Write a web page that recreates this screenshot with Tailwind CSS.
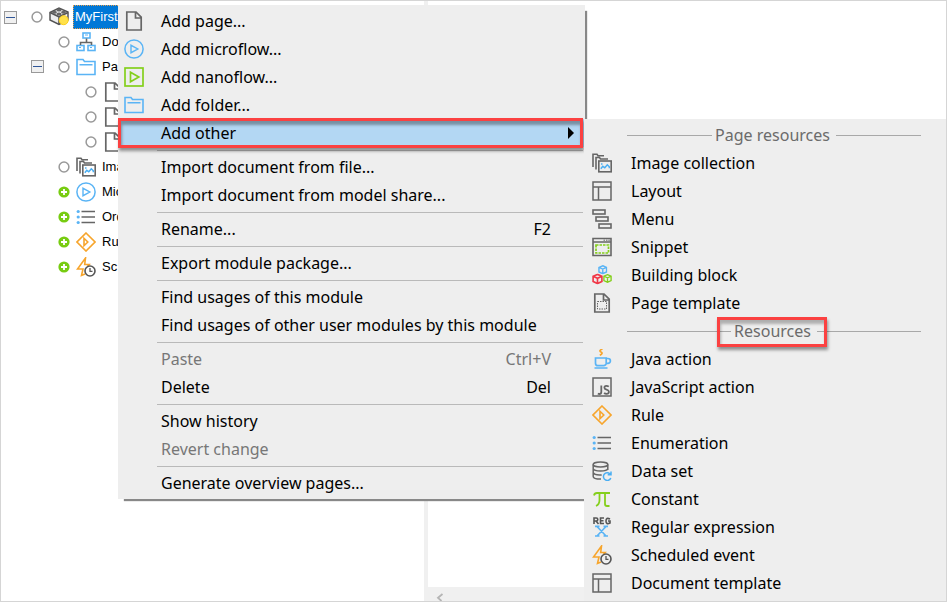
<!DOCTYPE html>
<html lang="en">
<head>
<meta charset="utf-8">
<title>Project Explorer</title>
<script src="https://cdn.jsdelivr.net/npm/@tailwindcss/browser@4"></script>
</head>
<body class="bg-white text-black">
<svg class="hidden" aria-hidden="true">
  <symbol id="page" viewBox="0 0 20 20" fill="none" stroke="#666" stroke-width="1.700"><path d="M2.800 1H12l5.200 5.200V19H2.800zM11.500 1.500v5.500h5.500"/></symbol>
  <symbol id="flow" viewBox="0 0 20 20" fill="none" stroke="#5ab4f5" stroke-width="1.500"><circle cx="10" cy="10" r="9.100"/><path d="M7 6.300v7.400L13.800 10z" stroke-width="1.400"/></symbol>
  <symbol id="nano" viewBox="0 0 20 20" fill="none" stroke="#84cf1c" stroke-width="1.700"><rect x="1" y="1" width="18" height="18"/><path d="M6.500 5.300v9.400L14.800 10z"/></symbol>
  <symbol id="folder" viewBox="0 0 20 20" fill="none" stroke="#5ab4f5" stroke-width="1.600"><path d="M1 17.500V2.500h6l1.500 2H19v13zM3.500 7.800h13"/></symbol>
  <symbol id="images" viewBox="0 0 20 20" fill="none" stroke="#666" stroke-width="1.600"><path d="M1 14V1.200h4l1 1.500h6M4 16.500V4.500h3.500l1 1.500H16"/><rect x="6.800" y="8" width="12.400" height="10.800"/><path d="M8.800 15.800l2-2.500 2 1.500 2.500-3 2 2v1.500" stroke="#4aaef2" stroke-width="1.500"/><path d="M9 11h1.500" stroke="#4aaef2"/></symbol>
  <symbol id="layout" viewBox="0 0 20 20" fill="none" stroke="#666" stroke-width="1.500"><path d="M1 1h18v18H1zM1 6h18M6.500 6v13"/></symbol>
  <symbol id="menu" viewBox="0 0 20 20" fill="none" stroke="#666" stroke-width="1.600"><rect x="1" y="1" width="12" height="4"/><rect x="4" y="8" width="12" height="4"/><rect x="7" y="15" width="12" height="4"/></symbol>
  <symbol id="snippet" viewBox="0 0 20 20" fill="none" stroke="#666" stroke-width="1.600"><path d="M1 1.500h18v17H1zM1 5h18"/><path d="M11.500 3.200h1.500M14 3.200h1.500M16.300 3.200h1.500" stroke-width="1"/><rect x="4" y="8" width="12.500" height="8" stroke="#84cf1c" stroke-width="1.700" stroke-dasharray="2.500 1"/></symbol>
  <symbol id="cube" viewBox="0 0 10 10" fill="none"><path d="M5 .8l4 1.700v4.800L5 9.200 1 7.300V2.500zM1 2.500l4 1.800 4-1.800M5 4.300v4.900" stroke-width="1.500"/></symbol>
  <symbol id="blocks" viewBox="0 0 20 20"><use href="#cube" x="6" y="0" width="9.500" height="9.500" stroke="#5ab4f5"/><use href="#cube" x="0" y="8.500" width="11" height="11" stroke="#f03848"/><use href="#cube" x="11" y="9" width="9" height="9" stroke="#84cf1c"/></symbol>
  <symbol id="template" viewBox="0 0 20 20" fill="none" stroke="#666" stroke-width="1.700"><path d="M2.800 1H12l5.200 5.200V19H2.800zM11.500 1.500v5.500h5.500"/><rect x="5.500" y="8.500" width="9" height="7.500" stroke-width="1" stroke-dasharray="1.500 1"/></symbol>
  <symbol id="java" viewBox="0 0 20 20" fill="none" stroke="#5ab4f5" stroke-width="1.700"><path d="M3.500 9h10.700v5.200a2.500 2.500 0 0 1-2.500 2.500H6a2.500 2.500 0 0 1-2.500-2.500zM14.500 9.500h1.500a2.200 2.200 0 0 1 0 4.800h-2M2.500 19h13"/><path d="M10.500 0C7.500 1 7.500 2.300 9 3s1.500 2-1.200 3.300" stroke="#f7a52c"/></symbol>
  <symbol id="js" viewBox="0 0 20 20" fill="none" stroke="#666" stroke-width="1.500"><rect x="1" y="1" width="18" height="18"/><path d="M9.300 8.500v6.500q0 2-2 2-.8 0-1.500-.3M16.800 9.700q-1-.9-2.500-.9-1.900 0-1.900 1.900 0 1.400 2.200 1.900 2.300.6 2.300 2.200 0 2.100-2.300 2.100-1.500 0-2.500-.9" stroke-width="1.800"/></symbol>
  <symbol id="rule" viewBox="0 0 20 20" fill="none" stroke="#f7a52c" stroke-width="1.600"><path d="M10 1l9 9-9 9-9-9zM8 6.300v7.400L11.800 10z"/></symbol>
  <symbol id="enum" viewBox="0 0 20 20" fill="none" stroke-width="1.600"><path d="M5.500 4.500h13.500M5.500 10h13.500M5.500 15.500h13.500" stroke="#666"/><g fill="#5ab4f5"><circle cx="2.200" cy="4.500" r="1.600"/><circle cx="2.200" cy="10" r="1.600"/><circle cx="2.200" cy="15.500" r="1.600"/></g></symbol>
  <symbol id="data" viewBox="0 0 20 20" fill="none" stroke="#666" stroke-width="1.500"><ellipse cx="8.500" cy="3.500" rx="7.300" ry="2.500"/><path d="M1.200 3.500v12c0 1.500 3 2.600 7.800 2.600M15.800 3.500V9M1.200 7.700c1 3 13.600 3 14.600 0M1.200 11.700c1 2 5 2.500 8.500 2.200"/><path d="M18 13a3.800 3.800 0 1 0 .8 4M19 10.500v3.300h-3.300" stroke="#4aaef2"/></symbol>
  <symbol id="pi" viewBox="0 0 20 20" fill="none" stroke="#84cf1c" stroke-width="1.800"><path d="M2 6.500Q2.500 4 5 4h13M7.500 4v7q0 4.500-3.500 6M13 4v11q0 2 2 2h2.500"/></symbol>
  <symbol id="regex" viewBox="0 0 20 20" fill="none" stroke="#555" stroke-width="1.600"><path d="M2 7V1h2.300q1.500 0 1.500 1.500T4.300 4H2M4 4l2.500 3M12 1H8.500v5.500H12M8.500 3.700h3M18 2q-4-2-4 2t4 2V4h-2"/><path d="M5 9.500l9 9.500M14 9.500L5 19M3 9.300h4.500M11.500 9.300h4.500M3 19h4.500M11.500 19h4.500" stroke="#5ab4f5" stroke-width="1.700"/></symbol>
  <symbol id="event" viewBox="0 0 20 20" fill="none" stroke="#f7a52c" stroke-width="1.600"><path d="M9 17l-3.500 1.500L7 12H1.500L9.500 1 8.700 7.500h4.500L11.500 9.500"/><circle cx="14" cy="14" r="5" stroke="#555"/><path d="M14 11v3.300h2.500" stroke="#555" stroke-width="1.300"/></symbol>
  <symbol id="domain" viewBox="0 0 20 20" fill="none" stroke="#5ab4f5" stroke-width="1.600"><rect x="7" y="1" width="7" height="5"/><rect x="1" y="13.500" width="7" height="5"/><rect x="12" y="13.500" width="7" height="5"/><path d="M9 3h3M3 15.500h2M14 15.500h2" stroke-width="1"/><path d="M10.500 6.500v4M4.500 13v-2.500h11V13" stroke="#666"/></symbol>
  <symbol id="module" viewBox="0 0 20 20"><path d="M1 5.500L10 1l9 4v8l-9 4.500-9-4.500z" fill="#eee" stroke="#555" stroke-width="1.500"/><path d="M1 5.500l9 4.300 9-4.300M10 9.500v8" fill="none" stroke="#555" stroke-width="1.600"/><g fill="#666"><ellipse cx="10" cy="3" rx="2.500" ry="1.500"/><ellipse cx="5.500" cy="5.200" rx="2.400" ry="1.500"/><ellipse cx="14.500" cy="5.200" rx="2.400" ry="1.500"/><ellipse cx="10" cy="7" rx="2.400" ry="1.500"/></g><circle cx="14.700" cy="13.200" r="4.500" fill="#ffe14a" stroke="#fbd01c"/></symbol>
  <symbol id="ring" viewBox="0 0 12 12"><circle cx="6" cy="6" r="4.900" fill="#fff" stroke="#999" stroke-width="1.500"/></symbol>
  <symbol id="plus" viewBox="0 0 12 12"><circle cx="6" cy="6" r="5.600" fill="#77cc11"/><path d="M6 3v6M3 6h6" stroke="#fff" stroke-width="1.800"/></symbol>
</svg>

<div class="relative flex h-screen overflow-hidden border border-[#d5d5d5] font-['Liberation_Sans',sans-serif] text-[13px]">
  <aside class="w-[423px] shrink-0 pt-1" aria-label="Project tree">
    <ul>
      <li class="flex h-6 items-center pl-[3px]">
        <button class="flex size-[13px] items-center justify-center border border-[#999] bg-[#f0f0f0]" aria-label="Collapse module"><span class="h-px w-[9px] bg-[#2f5597]"></span></button>
        <svg class="ml-[14px] size-3"><use href="#ring"/></svg>
        <svg class="ml-[6px] size-5"><use href="#module"/></svg>
        <a href="#" class="ml-1 flex h-6 w-[45px] items-center border border-r-0 border-dotted border-[#e8a050] bg-[#0078d7] pl-px text-white">MyFirst</a>
      </li>
      <li class="flex h-[25px] items-center pl-[57px]"><svg class="size-3"><use href="#ring"/></svg><svg class="ml-[6px] size-5"><use href="#domain"/></svg><a href="#" class="ml-[6px]">Do</a></li>
      <li class="flex h-[25px] items-center pl-[30px]">
        <button class="flex size-[13px] items-center justify-center border border-[#999] bg-[#f0f0f0]" aria-label="Collapse folder"><span class="h-px w-[9px] bg-[#2f5597]"></span></button>
        <svg class="ml-[14px] size-3"><use href="#ring"/></svg><svg class="ml-[6px] size-5"><use href="#folder"/></svg><a href="#" class="ml-[6px]">Pa</a>
      </li>
      <li class="flex h-[25px] items-center pl-[84px]"><svg class="size-3"><use href="#ring"/></svg><svg class="ml-[6px] size-5"><use href="#page"/></svg></li>
      <li class="flex h-[25px] items-center pl-[84px]"><svg class="size-3"><use href="#ring"/></svg><svg class="ml-[6px] size-5"><use href="#page"/></svg></li>
      <li class="flex h-[25px] items-center pl-[84px]"><svg class="size-3"><use href="#ring"/></svg><svg class="ml-[6px] size-5"><use href="#page"/></svg></li>
      <li class="flex h-[25px] items-center pl-[57px]"><svg class="size-3"><use href="#ring"/></svg><svg class="ml-[6px] size-5"><use href="#images"/></svg><a href="#" class="ml-[6px]">Ima</a></li>
      <li class="flex h-[25px] items-center pl-[57px]"><svg class="size-3"><use href="#plus"/></svg><svg class="ml-[6px] size-5"><use href="#flow"/></svg><a href="#" class="ml-[6px]">Mic</a></li>
      <li class="flex h-[25px] items-center pl-[57px]"><svg class="size-3"><use href="#plus"/></svg><svg class="ml-[6px] size-5"><use href="#enum"/></svg><a href="#" class="ml-[6px]">Ord</a></li>
      <li class="flex h-[25px] items-center pl-[57px]"><svg class="size-3"><use href="#plus"/></svg><svg class="ml-[6px] size-5"><use href="#rule"/></svg><a href="#" class="ml-[6px]">Ru</a></li>
      <li class="flex h-[25px] items-center pl-[57px]"><svg class="size-3"><use href="#plus"/></svg><svg class="ml-[6px] size-5"><use href="#event"/></svg><a href="#" class="ml-[6px]">Sc</a></li>
    </ul>
  </aside>
  <div class="w-1 shrink-0 bg-[#f0f0f0]"></div>
  <main class="flex flex-1 flex-col">
    <div class="flex-1"></div>
    <div class="flex h-[14px] items-end bg-[#f0f0f0] pl-2">
      <button aria-label="Scroll left"><svg class="h-2 w-2" viewBox="0 0 8 8" fill="none" stroke="#b5b5b5" stroke-width="1.800"><path d="M6.500 1L2 4.800 5.500 8"/></svg></button>
    </div>
  </main>

  <div role="menu" class="absolute left-[117px] top-1 w-[467px] bg-[#eee] py-0.5 font-['Noto_Sans',sans-serif] text-base shadow-[4px_4px_1px_-2px_#888]">
    <button role="menuitem" class="flex h-7 w-full items-center gap-[17px] pl-[6px]"><svg class="size-5"><use href="#page"/></svg>Add page...</button>
    <button role="menuitem" class="flex h-7 w-full items-center gap-[17px] pl-[6px]"><svg class="size-5"><use href="#flow"/></svg>Add microflow...</button>
    <button role="menuitem" class="flex h-7 w-full items-center gap-[17px] pl-[6px]"><svg class="size-5"><use href="#nano"/></svg>Add nanoflow...</button>
    <button role="menuitem" class="flex h-7 w-full items-center gap-[17px] pl-[6px]"><svg class="size-5"><use href="#folder"/></svg>Add folder...</button>
    <div class="relative">
      <button role="menuitem" aria-haspopup="true" class="flex h-7 w-full items-center justify-between bg-[#b3d7f3] pl-[43px] pr-[11px]">Add other<svg class="h-3 w-[6px]" viewBox="0 0 6 12"><path d="M0 0l6 6-6 6z"/></svg></button>
      <div class="pointer-events-none absolute -top-px -bottom-px left-0 right-[2px] border-3 border-[#fb4141] shadow-[1px_3px_3px_#0006,inset_1px_4px_3px_#0005]"></div>
    </div>
    <hr class="mt-[3px] mb-0.5 ml-[39px] mr-0.5 border-[#b9b9b9]">
    <button role="menuitem" class="flex h-7 w-full items-center pl-[43px]">Import document from file...</button>
    <button role="menuitem" class="flex h-7 w-full items-center pl-[43px]">Import document from model share...</button>
    <hr class="mt-[3px] mb-0.5 ml-[39px] mr-0.5 border-[#b9b9b9]">
    <button role="menuitem" class="flex h-7 w-full items-center justify-between pl-[43px] pr-[34px]">Rename...<kbd class="font-['Noto_Sans',sans-serif]">F2</kbd></button>
    <hr class="mt-[3px] mb-0.5 ml-[39px] mr-0.5 border-[#b9b9b9]">
    <button role="menuitem" class="flex h-7 w-full items-center pl-[43px]">Export module package...</button>
    <hr class="mt-[3px] mb-0.5 ml-[39px] mr-0.5 border-[#b9b9b9]">
    <button role="menuitem" class="flex h-7 w-full items-center pl-[43px]">Find usages of this module</button>
    <button role="menuitem" class="flex h-7 w-full items-center pl-[43px]">Find usages of other user modules by this module</button>
    <hr class="mt-[3px] mb-0.5 ml-[39px] mr-0.5 border-[#b9b9b9]">
    <button role="menuitem" disabled class="flex h-7 w-full items-center justify-between pl-[43px] pr-[34px] text-[#777]">Paste<kbd class="font-['Noto_Sans',sans-serif]">Ctrl+V</kbd></button>
    <button role="menuitem" class="flex h-7 w-full items-center justify-between pl-[43px] pr-[34px]">Delete<kbd class="font-['Noto_Sans',sans-serif]">Del</kbd></button>
    <hr class="mt-[3px] mb-0.5 ml-[39px] mr-0.5 border-[#b9b9b9]">
    <button role="menuitem" class="flex h-7 w-full items-center pl-[43px]">Show history</button>
    <button role="menuitem" disabled class="flex h-7 w-full items-center pl-[43px] text-[#777]">Revert change</button>
    <hr class="mt-[3px] mb-0.5 ml-[39px] mr-0.5 border-[#b9b9b9]">
    <button role="menuitem" class="flex h-7 w-full items-center pl-[43px]">Generate overview pages...</button>
  </div>

  <div role="menu" class="absolute bottom-0 left-[583px] right-0 top-[118px] bg-[#eee] pt-0.5 font-['Noto_Sans',sans-serif] text-base">
    <h2 class="flex h-7 items-center gap-[3px] pl-[43px] pr-[25px] text-[#6b6b6b]"><span class="h-px flex-1 bg-[#a8a8a8]"></span><span class="pr-[3px]">Page resources</span><span class="h-px flex-1 bg-[#a8a8a8]"></span></h2>
    <button role="menuitem" class="flex h-7 w-full items-center gap-[19px] pl-2"><svg class="size-5"><use href="#images"/></svg>Image collection</button>
    <button role="menuitem" class="flex h-7 w-full items-center gap-[19px] pl-2"><svg class="size-5"><use href="#layout"/></svg>Layout</button>
    <button role="menuitem" class="flex h-7 w-full items-center gap-[19px] pl-2"><svg class="size-5"><use href="#menu"/></svg>Menu</button>
    <button role="menuitem" class="flex h-7 w-full items-center gap-[19px] pl-2"><svg class="size-5"><use href="#snippet"/></svg>Snippet</button>
    <button role="menuitem" class="flex h-7 w-full items-center gap-[19px] pl-2"><svg class="size-5"><use href="#blocks"/></svg>Building block</button>
    <button role="menuitem" class="flex h-7 w-full items-center gap-[19px] pl-2"><svg class="size-5"><use href="#template"/></svg>Page template</button>
    <h2 class="flex h-7 items-center gap-[3px] pl-[43px] pr-[25px] text-[#6b6b6b]"><span class="h-px flex-1 bg-[#a8a8a8]"></span><span class="relative pr-[3px]">Resources<span class="absolute -left-[17px] -right-[13px] -bottom-1 -top-0.5 border-3 border-[#fb4141] shadow-[1px_3px_3px_#0006,inset_1px_4px_3px_#0004]"></span></span><span class="h-px flex-1 bg-[#a8a8a8]"></span></h2>
    <button role="menuitem" class="flex h-7 w-full items-center gap-[19px] pl-2"><svg class="size-5"><use href="#java"/></svg>Java action</button>
    <button role="menuitem" class="flex h-7 w-full items-center gap-[19px] pl-2"><svg class="size-5"><use href="#js"/></svg>JavaScript action</button>
    <button role="menuitem" class="flex h-7 w-full items-center gap-[19px] pl-2"><svg class="size-5"><use href="#rule"/></svg>Rule</button>
    <button role="menuitem" class="flex h-7 w-full items-center gap-[19px] pl-2"><svg class="size-5"><use href="#enum"/></svg>Enumeration</button>
    <button role="menuitem" class="flex h-7 w-full items-center gap-[19px] pl-2"><svg class="size-5"><use href="#data"/></svg>Data set</button>
    <button role="menuitem" class="flex h-7 w-full items-center gap-[19px] pl-2"><svg class="size-5"><use href="#pi"/></svg>Constant</button>
    <button role="menuitem" class="flex h-7 w-full items-center gap-[19px] pl-2"><svg class="size-5"><use href="#regex"/></svg>Regular expression</button>
    <button role="menuitem" class="flex h-7 w-full items-center gap-[19px] pl-2"><svg class="size-5"><use href="#event"/></svg>Scheduled event</button>
    <button role="menuitem" class="flex h-7 w-full items-center gap-[19px] pl-2"><svg class="size-5"><use href="#layout"/></svg>Document template</button>
  </div>
</div>
</body>
</html>
